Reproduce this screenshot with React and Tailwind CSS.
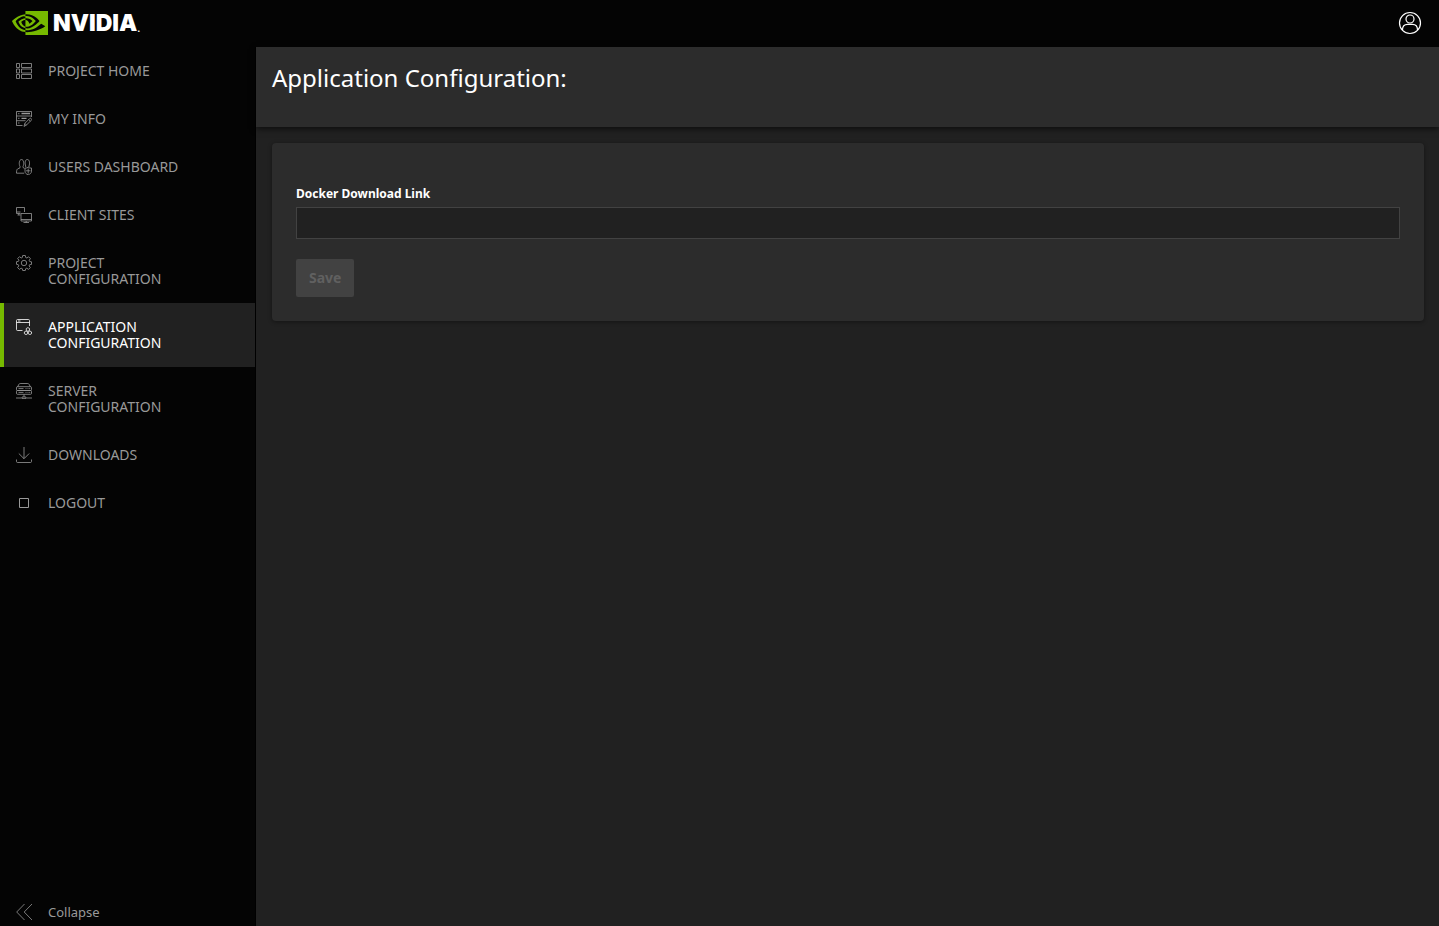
import React, { useState } from "react";
import { SiNvidia } from "react-icons/si";

const Icon = ({ children }) => (
  <svg
    className="size-4 shrink-0"
    viewBox="0 0 16 16"
    fill="none"
    stroke="currentColor"
    strokeWidth="0.8"
    aria-hidden="true"
  >
    {children}
  </svg>
);

const HomeIcon = () => (
  <Icon>
    <path d="M.5.5h3v4h-3zM5.5.5h10v4h-10zM.5 6h3v4h-3zM5.5 6h10v4h-10zM.5 11.5h3v4h-3zM5.5 11.5h10v4h-10z" />
  </Icon>
);

const InfoIcon = () => (
  <Icon>
    <path d="M15.5 6V.5H.5v14h6M.5 5h15M.5 9.7h9M2 2.7h1.5M2 7.3h1.5M2 12h1.5" />
    <path d="M5.5 2.5h8.5M5.5 7.3h5" strokeWidth="1.3" />
    <path d="M8 15.4l.8-3 5-5c.9-.8 2.5.8 1.6 1.7l-5 5zM8.8 12.4l1.8 1.7M12.7 8.5l1.7 1.7" />
  </Icon>
);

const UsersIcon = () => (
  <Icon>
    <path d="M4 7.5C2.8 5.5 3 .5 5.5.5s2.7 5 1.5 7M4 7.5v1.3L1.5 10C.7 10.5.5 12.5.5 14.2h7.7M7 7.5v1l1.5.8" />
    <path d="M9.7 7C8.7 4.5 8.9.5 11.3.5s2.7 4 1.7 6.5M9.7 7v1M13 7v1" />
    <path d="M12.2 8.2c1 .7 2 .9 3.3.9v3c0 2-1.3 3-3.3 3.7C10.2 15.1 9 14 9 12.1v-3c1.2 0 2.2-.2 3.2-.9zM12.2 9.5v5M10 11.8h4.5" />
  </Icon>
);

const SitesIcon = () => (
  <Icon>
    <path d="M4.5 6.5h-4v-6h8V5M.5 5h4M1.5 8h3M2.8 6.5V8" />
    <path d="M5 6.5h10.5V14H5zM5 12.5h10.5M10.2 14v1.5M7.5 15.5h5.5" />
  </Icon>
);

const GearIcon = () => (
  <Icon>
    <circle cx="8" cy="8" r="2.7" />
    <path d="M6.7.5h2.6l.4 2 1.2.5 1.7-1.2 1.8 1.8L13.2 5.3l.5 1.2 1.8.3v2.6l-1.9.3-.5 1.2 1.2 1.7-1.8 1.8-1.7-1.2-1.1.5-.4 1.8H6.7l-.4-1.8-1.2-.5-1.7 1.2-1.8-1.8 1.2-1.7-.5-1.2L.5 9.3V6.7l1.9-.3.5-1.2-1.2-1.7 1.8-1.8L5.2 3l1.1-.5z" />
  </Icon>
);

const AppIcon = () => (
  <Icon>
    <path d="M6.5 11.5h-5c-.6 0-1-.4-1-1v-9c0-.6.4-1 1-1h11c.6 0 1 .4 1 1V7M.5 3.5h13M2 2h2.5" />
    <path d="M10.3 9.5l1.6-.9 1.6.9v1.9l-1.6.9-1.6-.9zM8.4 12.9l1.6-.9 1.7.9v1.8l-1.7.9-1.6-.9zM12.2 12.9l1.7-.9 1.6.9v1.8l-1.6.9-1.7-.9z" />
  </Icon>
);

const ServerIcon = () => (
  <Icon>
    <path d="M1.5 4L3 1.2c.3-.5.7-.7 1.2-.7h7.6c.5 0 .9.2 1.2.7L14.5 4" />
    <rect x="0.5" y="3.7" width="15" height="3.8" rx="1" />
    <rect x="0.5" y="7.5" width="15" height="3.8" rx="1" />
    <path d="M2.5 5.6h5M2.5 9.4h5M9.5 5.6h1M11.5 5.6h1M13.2 5.6h1M9.5 9.4h1M11.5 9.4h1M13.2 9.4h1" />
    <path d="M8 11.3v2.7M0 15h5.5M10.5 15H16M6 14h4v1.6H6z" />
  </Icon>
);

const DownloadIcon = () => (
  <Icon>
    <path d="M8 0v11.5M2.8 6.5L8 11.7l5.2-5.2M.5 12.5v2c0 .6.4 1 1 1h13c.6 0 1-.4 1-1v-2" />
  </Icon>
);

const LogoutIcon = () => (
  <Icon>
    <path d="M3.5 3.5h9v9h-9z" strokeWidth="1" />
  </Icon>
);

const CollapseIcon = () => (
  <Icon>
    <path d="M8.5 0L.7 8l7.8 8M16 0L8.2 8l7.8 8" />
  </Icon>
);

const menu = [
  { label: "PROJECT HOME", icon: HomeIcon },
  { label: "MY INFO", icon: InfoIcon },
  { label: "USERS DASHBOARD", icon: UsersIcon },
  { label: "CLIENT SITES", icon: SitesIcon },
  { label: "PROJECT CONFIGURATION", icon: GearIcon },
  { label: "APPLICATION CONFIGURATION", icon: AppIcon },
  { label: "SERVER CONFIGURATION", icon: ServerIcon },
  { label: "DOWNLOADS", icon: DownloadIcon },
  { label: "LOGOUT", icon: LogoutIcon },
];

const App = () => {
  const [active, setActive] = useState("APPLICATION CONFIGURATION");
  const [link, setLink] = useState("");

  return (
    <div className="flex min-h-screen flex-col bg-[#212121] font-['Noto_Sans',sans-serif] text-white">
      <header className="flex h-[47px] items-center justify-between bg-[#040404] pr-[17px] pb-px pl-3">
        <a href="#" className="flex items-center gap-[5px]">
          <SiNvidia className="size-9 text-[#76b900]" aria-hidden="true" />
          <span className="flex items-end font-['Inter',sans-serif] text-[23px] leading-6 font-black">
            NVIDIA<span className="text-[8px] leading-3">.</span>
          </span>
        </a>
        <button type="button" aria-label="Account">
          <svg
            className="size-6"
            viewBox="0 0 24 24"
            fill="none"
            stroke="currentColor"
            strokeWidth="1.2"
          >
            <circle cx="12" cy="12" r="10.5" />
            <circle cx="12" cy="8" r="4" />
            <path d="M4.5 19c0-4 2.5-5.7 5-5.7h5c2.5 0 5 1.7 5 5.7" />
          </svg>
        </button>
      </header>

      <div className="flex grow">
        <aside className="flex w-64 shrink-0 flex-col justify-between border-r border-black bg-[#040404] text-[#999999]">
          <nav>
            {menu.map(({ label, icon: MenuIcon }) => (
              <a
                key={label}
                href="#"
                onClick={() => setActive(label)}
                className={
                  label === active
                    ? "flex gap-4 border-l-4 border-[#76b900] bg-[#212121] py-4 pr-12 pl-3 text-sm leading-4 text-white"
                    : "flex gap-4 py-4 pr-12 pl-4 text-sm leading-4"
                }
              >
                <MenuIcon />
                {label}
              </a>
            ))}
          </nav>
          <button
            type="button"
            className="flex items-center gap-4 px-4 pb-1 text-[13px] leading-5"
          >
            <CollapseIcon />
            Collapse
          </button>
        </aside>

        <main className="min-w-0 grow">
          <div className="h-20 bg-[#2c2c2c] px-4 py-4 shadow-[0_2px_6px_rgba(0,0,0,0.6)]">
            <h1 className="text-2xl leading-[30px]">Application Configuration:</h1>
          </div>
          <form
            className="m-4 mr-[15px] flex flex-col items-start rounded bg-[#2c2c2c] px-6 pt-[42px] pb-6 shadow-[0_1px_4px_rgba(0,0,0,0.4)]"
            onSubmit={(e) => e.preventDefault()}
          >
            <label htmlFor="docker-link" className="mb-1 text-xs leading-[18px] font-bold">
              Docker Download Link
            </label>
            <input
              id="docker-link"
              type="text"
              value={link}
              onChange={(e) => setLink(e.target.value)}
              className="mb-5 h-8 w-full border border-[#424242] bg-[#212121] px-2 text-sm outline-none"
            />
            <button
              type="submit"
              disabled={!link}
              className="rounded-xs bg-[#76b900] px-[13px] py-2 text-sm leading-[22px] font-bold text-black disabled:bg-[#424242] disabled:text-[#606060]"
            >
              Save
            </button>
          </form>
        </main>
      </div>
    </div>
  );
};

export default App;
